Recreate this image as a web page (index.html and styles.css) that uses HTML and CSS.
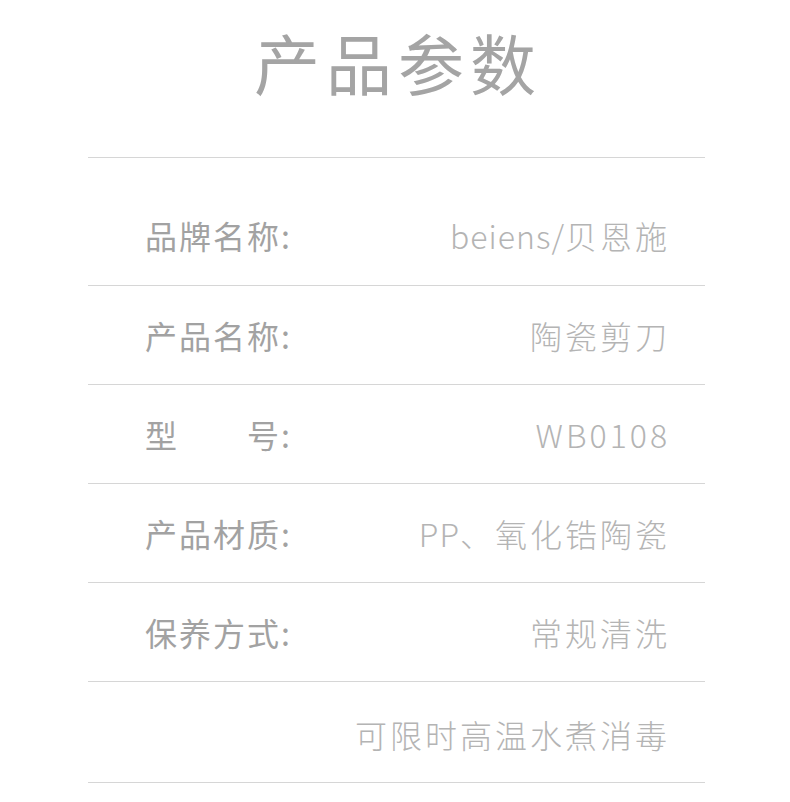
FILE: index.html
```html
<!DOCTYPE html>
<html lang="zh-CN">
<head>
<meta charset="utf-8">
<title>产品参数</title>
<link rel="stylesheet" href="styles.css">
</head>
<body>
<div class="page">
  <h1 class="title">产品参数</h1>
  <div class="specs">
    <div class="row first">
      <span class="label">品牌名称:</span>
      <span class="value"><span class="latin">beiens/</span>贝恩施</span>
    </div>
    <div class="row">
      <span class="label">产品名称:</span>
      <span class="value">陶瓷剪刀</span>
    </div>
    <div class="row">
      <span class="label">型　　号:</span>
      <span class="value">WB0108</span>
    </div>
    <div class="row">
      <span class="label">产品材质:</span>
      <span class="value"><span class="latin">PP</span>、氧化锆陶瓷</span>
    </div>
    <div class="row">
      <span class="label">保养方式:</span>
      <span class="value">常规清洗</span>
    </div>
    <div class="row last">
      <span class="value">可限时高温水煮消毒</span>
    </div>
  </div>
</div>
</body>
</html>
```

FILE: styles.css
```css
html, body {
  margin: 0;
  padding: 0;
  background: #ffffff;
}

.page {
  width: 790px;
  font-family: "Noto Sans CJK SC", "Noto Sans", sans-serif;
}

.title {
  margin: 0;
  height: 157px;
  box-sizing: border-box;
  padding-top: 23px;
  line-height: 76px;
  font-size: 66px;
  font-weight: 400;
  letter-spacing: 6px;
  text-indent: 6px;
  text-align: center;
  color: #a4a4a4;
}

.specs {
  margin: 0 85px 0 88px;
  border-top: 1px solid #d6d6d6;
}

.row {
  display: flex;
  justify-content: space-between;
  align-items: center;
  box-sizing: content-box;
  padding: 0 35px 0 57px;
  height: 98px;
  border-bottom: 1px solid #d6d6d6;
  font-size: 32px;
  letter-spacing: 2px;
  line-height: 40px;
}

.row.first {
  padding-top: 27px;
  height: 100px;
}

.row.last {
  padding-top: 4px;
  height: 96px;
}

.label {
  color: #a2a2a2;
  font-weight: 400;
}

.value {
  margin-left: auto;
  color: #b4b4b4;
  font-weight: 300;
  letter-spacing: 3px;
}

.latin {
  letter-spacing: 1px;
}
```
